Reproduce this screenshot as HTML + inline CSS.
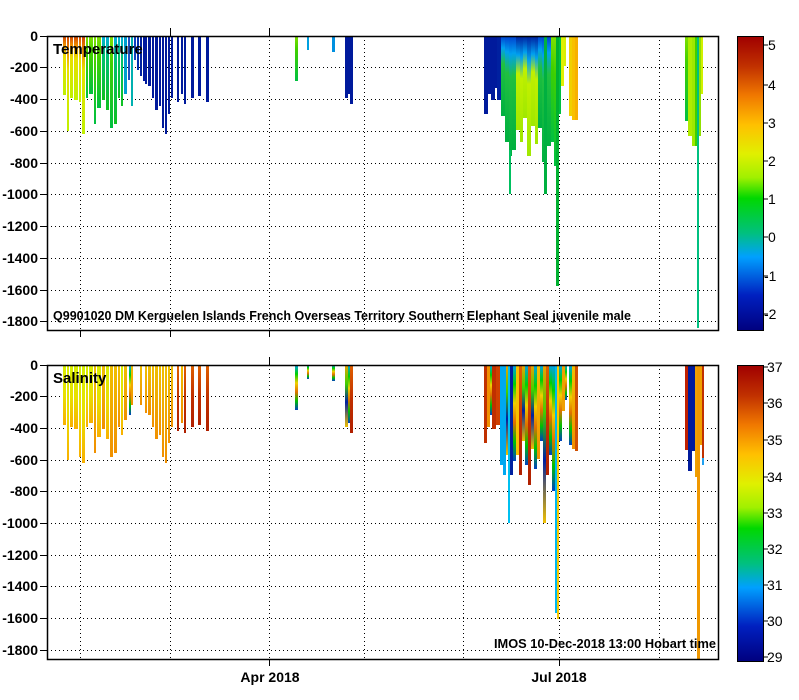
<!DOCTYPE html>
<html><head><meta charset="utf-8"><style>
html,body{margin:0;padding:0;background:#fff;}
svg{display:block;}
text{font-family:"Liberation Sans",sans-serif;}
.yl{font-size:14px;font-weight:bold;text-anchor:end;fill:#000;}
.cl{font-size:14px;fill:#000;}
</style></head><body>
<svg width="799" height="700" viewBox="0 0 799 700" xmlns="http://www.w3.org/2000/svg">
<defs>
<linearGradient id="jet" x1="0" y1="1" x2="0" y2="0">
<stop offset="0" stop-color="#00007f"/>
<stop offset="0.12" stop-color="#0020c0"/>
<stop offset="0.25" stop-color="#00a0ff"/>
<stop offset="0.33" stop-color="#00c080"/>
<stop offset="0.45" stop-color="#00d800"/>
<stop offset="0.52" stop-color="#a0f000"/>
<stop offset="0.6" stop-color="#e0f000"/>
<stop offset="0.7" stop-color="#ffc000"/>
<stop offset="0.8" stop-color="#f07800"/>
<stop offset="0.9" stop-color="#c03000"/>
<stop offset="1" stop-color="#a00000"/>
</linearGradient>
<linearGradient id="tA" x1="0" y1="0" x2="0" y2="1"><stop offset="0" stop-color="#d04000"/><stop offset="0.15" stop-color="#f09000"/><stop offset="0.35" stop-color="#e8e000"/><stop offset="1" stop-color="#c0f000"/></linearGradient>
<linearGradient id="tB" x1="0" y1="0" x2="0" y2="1"><stop offset="0" stop-color="#80e000"/><stop offset="0.3" stop-color="#40d000"/><stop offset="1" stop-color="#00c040"/></linearGradient>
<linearGradient id="tC" x1="0" y1="0" x2="0" y2="1"><stop offset="0" stop-color="#00b0e0"/><stop offset="0.3" stop-color="#00c070"/><stop offset="1" stop-color="#10c020"/></linearGradient>
<linearGradient id="tD" x1="0" y1="0" x2="0" y2="1"><stop offset="0" stop-color="#0040d0"/><stop offset="0.15" stop-color="#00a0f0"/><stop offset="0.35" stop-color="#20c040"/><stop offset="1" stop-color="#00b040"/></linearGradient>
<linearGradient id="tE" x1="0" y1="0" x2="0" y2="1"><stop offset="0" stop-color="#0020a0"/><stop offset="0.2" stop-color="#00a0f0"/><stop offset="0.4" stop-color="#c0f000"/><stop offset="1" stop-color="#a0e800"/></linearGradient>
<linearGradient id="sA" x1="0" y1="0" x2="0" y2="1"><stop offset="0" stop-color="#d8f000"/><stop offset="0.5" stop-color="#e8e000"/><stop offset="1" stop-color="#f8b000"/></linearGradient>
<linearGradient id="sB" x1="0" y1="0" x2="0" y2="1"><stop offset="0" stop-color="#f0c000"/><stop offset="1" stop-color="#f09000"/></linearGradient>
<linearGradient id="sC" x1="0" y1="0" x2="0" y2="1"><stop offset="0" stop-color="#e06000"/><stop offset="0.5" stop-color="#c03000"/><stop offset="1" stop-color="#b02000"/></linearGradient>
<linearGradient id="sM" x1="0" y1="0" x2="0" y2="1"><stop offset="0" stop-color="#00a0f0"/><stop offset="0.2" stop-color="#00d000"/><stop offset="0.4" stop-color="#f0d000"/><stop offset="0.6" stop-color="#e07000"/><stop offset="0.8" stop-color="#00c000"/><stop offset="1" stop-color="#0040c0"/></linearGradient>
<linearGradient id="sN" x1="0" y1="0" x2="0" y2="1"><stop offset="0" stop-color="#f0a000"/><stop offset="0.3" stop-color="#40d000"/><stop offset="0.6" stop-color="#0020a0"/><stop offset="1" stop-color="#f0c000"/></linearGradient>
</defs>

<g>
<g stroke="#000" stroke-width="1" stroke-dasharray="1,3">
<line x1="47" y1="67.5" x2="718" y2="67.5"/><line x1="47" y1="99.5" x2="718" y2="99.5"/><line x1="47" y1="131.5" x2="718" y2="131.5"/><line x1="47" y1="163.5" x2="718" y2="163.5"/><line x1="47" y1="194.5" x2="718" y2="194.5"/><line x1="47" y1="226.5" x2="718" y2="226.5"/><line x1="47" y1="258.5" x2="718" y2="258.5"/><line x1="47" y1="290.5" x2="718" y2="290.5"/><line x1="47" y1="321.5" x2="718" y2="321.5"/>
<line x1="80.5" y1="36" x2="80.5" y2="330"/><line x1="170.5" y1="36" x2="170.5" y2="330"/><line x1="269.5" y1="36" x2="269.5" y2="330"/><line x1="364.5" y1="36" x2="364.5" y2="330"/><line x1="463.5" y1="36" x2="463.5" y2="330"/><line x1="559.5" y1="36" x2="559.5" y2="330"/><line x1="659.5" y1="36" x2="659.5" y2="330"/>
</g>
<g>
<rect x="63" y="36" width="3" height="59" fill="url(#tA)"/>
<rect x="67" y="36" width="2" height="95" fill="url(#tA)"/>
<rect x="70" y="36" width="3" height="62" fill="url(#tA)"/>
<rect x="74" y="36" width="4" height="64" fill="url(#tA)"/>
<rect x="79" y="36" width="2" height="66" fill="url(#tA)"/>
<rect x="82" y="36" width="3" height="98" fill="url(#tA)"/>
<rect x="86" y="36" width="2" height="62" fill="url(#tB)"/>
<rect x="89" y="36" width="4" height="58" fill="url(#tB)"/>
<rect x="94" y="36" width="2" height="88" fill="url(#tB)"/>
<rect x="97" y="36" width="4" height="72" fill="url(#tB)"/>
<rect x="102" y="36" width="3" height="64" fill="url(#tC)"/>
<rect x="106" y="36" width="3" height="74" fill="url(#tC)"/>
<rect x="110" y="36" width="3" height="92" fill="url(#tB)"/>
<rect x="114" y="36" width="3" height="88" fill="url(#tC)"/>
<rect x="118" y="36" width="2" height="62" fill="url(#tC)"/>
<rect x="121" y="36" width="2" height="70" fill="url(#tC)"/>
<rect x="124" y="36" width="3" height="58" fill="#00a0d0"/>
<rect x="128" y="36" width="2" height="44" fill="#2050c0"/>
<rect x="131" y="36" width="2" height="70" fill="#00b0b0"/>
<rect x="134" y="36" width="2" height="24" fill="#1040c0"/>
<rect x="137" y="36" width="2" height="34" fill="#0030b0"/>
<rect x="140" y="36" width="2" height="40" fill="#0020a0"/>
<rect x="143" y="36" width="2" height="45" fill="#0018a0"/>
</g>
<g fill="#001a9c">
<rect x="145" y="36" width="2" height="48"/>
<rect x="148" y="36" width="3" height="50"/>
<rect x="152" y="36" width="2" height="62"/>
<rect x="155" y="36" width="3" height="74"/>
<rect x="159" y="36" width="2" height="70"/>
<rect x="162" y="36" width="2" height="92"/>
<rect x="165" y="36" width="2" height="98"/>
<rect x="168" y="36" width="2" height="78"/>
<rect x="171" y="36" width="2" height="62"/>
<rect x="177" y="36" width="2" height="66"/>
<rect x="181" y="36" width="2" height="58"/>
<rect x="184" y="36" width="2" height="68"/>
<rect x="191" y="36" width="3" height="62"/>
<rect x="198" y="36" width="3" height="60"/>
<rect x="206" y="36" width="3" height="66"/>
<rect x="295" y="36" width="3" height="45" fill="url(#tB)"/>
<rect x="307" y="36" width="2" height="14" fill="#00a0e0"/>
<rect x="332" y="36" width="3" height="16" fill="#0090e0"/>
<rect x="345" y="36" width="3" height="62"/>
<rect x="348" y="36" width="2" height="58"/>
<rect x="350" y="36" width="3" height="68"/>
</g>
<g>
<rect x="484" y="36" width="4" height="78" fill="#001a9c"/>
<rect x="488" y="36" width="3" height="58" fill="#001a9c"/>
<rect x="491" y="36" width="4" height="64" fill="#001a9c"/>
<rect x="495" y="36" width="3" height="52" fill="#001a9c"/>
<rect x="497" y="36" width="4" height="64" fill="#0020a0"/>
<rect x="501" y="36" width="4" height="80" fill="url(#tD)"/>
<rect x="505" y="36" width="4" height="106" fill="url(#tD)"/>
<rect x="509" y="36" width="3" height="120" fill="url(#tD)"/>
<rect x="509" y="150" width="2" height="44" fill="#00c060"/>
<rect x="512" y="36" width="4" height="114" fill="url(#tD)"/>
<rect x="516" y="36" width="4" height="94" fill="url(#tE)"/>
<rect x="520" y="36" width="3" height="106" fill="url(#tE)"/>
<rect x="523" y="36" width="4" height="82" fill="url(#tE)"/>
<rect x="527" y="36" width="4" height="120" fill="url(#tE)"/>
<rect x="531" y="36" width="4" height="90" fill="url(#tE)"/>
<rect x="535" y="36" width="3" height="108" fill="url(#tE)"/>
<rect x="538" y="36" width="4" height="92" fill="url(#tD)"/>
<rect x="542" y="36" width="3" height="126" fill="url(#tD)"/>
<rect x="544" y="36" width="3" height="158" fill="#00b040"/>
<rect x="547" y="36" width="4" height="110" fill="url(#tD)"/>
<rect x="551" y="36" width="3" height="106" fill="url(#tB)"/>
<rect x="554" y="36" width="3" height="130" fill="url(#tB)"/>
<rect x="556" y="36" width="3" height="250" fill="#00b030"/>
<rect x="559" y="36" width="2" height="78" fill="#00c040"/>
<rect x="561" y="36" width="3" height="50" fill="#e0f000"/>
<rect x="564" y="36" width="2" height="30" fill="#d8f000"/>
<rect x="569" y="36" width="3" height="80" fill="#f0d000"/>
<rect x="572" y="36" width="3" height="84" fill="#f8c000"/>
<rect x="575" y="36" width="3" height="84" fill="#f8b000"/>
<rect x="685" y="36" width="3" height="85" fill="url(#tB)"/>
<rect x="688" y="36" width="4" height="100" fill="#b0ec00"/>
<rect x="692" y="36" width="3" height="110" fill="#a0e800"/>
<rect x="695" y="36" width="2" height="110" fill="#40d000"/>
<rect x="697" y="36" width="2" height="292" fill="#00c080"/>
<rect x="699" y="36" width="2" height="100" fill="#90e000"/>
<rect x="701" y="36" width="2" height="58" fill="#d0f000"/>
</g>
<rect x="47.5" y="36.5" width="671" height="294" fill="none" stroke="#000" stroke-width="1.5"/>
<g stroke="#000"><line x1="40" y1="36.5" x2="47" y2="36.5"/><line x1="40" y1="67.5" x2="47" y2="67.5"/><line x1="40" y1="99.5" x2="47" y2="99.5"/><line x1="40" y1="131.5" x2="47" y2="131.5"/><line x1="40" y1="163.5" x2="47" y2="163.5"/><line x1="40" y1="194.5" x2="47" y2="194.5"/><line x1="40" y1="226.5" x2="47" y2="226.5"/><line x1="40" y1="258.5" x2="47" y2="258.5"/><line x1="40" y1="290.5" x2="47" y2="290.5"/><line x1="40" y1="321.5" x2="47" y2="321.5"/>
<line x1="170.5" y1="28" x2="170.5" y2="36"/><line x1="269.5" y1="28" x2="269.5" y2="36"/><line x1="559.5" y1="28" x2="559.5" y2="36"/><line x1="80.5" y1="330" x2="80.5" y2="337"/><line x1="170.5" y1="330" x2="170.5" y2="337"/><line x1="269.5" y1="330" x2="269.5" y2="337"/></g>
<g class="yl"><text x="38" y="41">0</text><text x="38" y="72">-200</text><text x="38" y="104">-400</text><text x="38" y="136">-600</text><text x="38" y="168">-800</text><text x="38" y="199">-1000</text><text x="38" y="231">-1200</text><text x="38" y="263">-1400</text><text x="38" y="295">-1600</text><text x="38" y="326">-1800</text></g>
<text x="53" y="54" style="font-size:15px;font-weight:bold">Temperature</text>
<text x="53" y="320" textLength="578" lengthAdjust="spacingAndGlyphs" style="font-size:13px;font-weight:bold">Q9901020 DM Kerguelen Islands French Overseas Territory Southern Elephant Seal juvenile male</text>
<rect x="737.5" y="36.5" width="26" height="294" fill="url(#jet)" stroke="#000"/>
<g stroke="#000"><line x1="763" y1="45" x2="768" y2="45"/><line x1="763" y1="85" x2="768" y2="85"/><line x1="763" y1="123" x2="768" y2="123"/><line x1="763" y1="161" x2="768" y2="161"/><line x1="763" y1="199" x2="768" y2="199"/><line x1="763" y1="237" x2="768" y2="237"/><line x1="763" y1="276" x2="768" y2="276"/><line x1="763" y1="314" x2="768" y2="314"/></g>
<g class="cl"><text x="768" y="50">5</text><text x="768" y="90">4</text><text x="768" y="128">3</text><text x="768" y="166">2</text><text x="768" y="204">1</text><text x="768" y="242">0</text><text x="764" y="281">-1</text><text x="764" y="319">-2</text></g>
</g>

<g>
<g stroke="#000" stroke-width="1" stroke-dasharray="1,3">
<line x1="47" y1="396.5" x2="718" y2="396.5"/><line x1="47" y1="428.5" x2="718" y2="428.5"/><line x1="47" y1="460.5" x2="718" y2="460.5"/><line x1="47" y1="491.5" x2="718" y2="491.5"/><line x1="47" y1="523.5" x2="718" y2="523.5"/><line x1="47" y1="555.5" x2="718" y2="555.5"/><line x1="47" y1="586.5" x2="718" y2="586.5"/><line x1="47" y1="618.5" x2="718" y2="618.5"/><line x1="47" y1="650.5" x2="718" y2="650.5"/>
<line x1="80.5" y1="365" x2="80.5" y2="659"/><line x1="170.5" y1="365" x2="170.5" y2="659"/><line x1="269.5" y1="365" x2="269.5" y2="659"/><line x1="364.5" y1="365" x2="364.5" y2="659"/><line x1="463.5" y1="365" x2="463.5" y2="659"/><line x1="559.5" y1="365" x2="559.5" y2="659"/><line x1="659.5" y1="365" x2="659.5" y2="659"/>
</g>
<g>
<rect x="63" y="365" width="3" height="60" fill="url(#sA)"/>
<rect x="67" y="365" width="2" height="95" fill="url(#sA)"/>
<rect x="70" y="365" width="3" height="62" fill="url(#sA)"/>
<rect x="74" y="365" width="4" height="64" fill="url(#sA)"/>
<rect x="79" y="365" width="2" height="92" fill="url(#sA)"/>
<rect x="82" y="365" width="3" height="98" fill="url(#sA)"/>
<rect x="86" y="365" width="2" height="62" fill="url(#sA)"/>
<rect x="89" y="365" width="4" height="58" fill="url(#sA)"/>
<rect x="94" y="365" width="2" height="88" fill="url(#sB)"/>
<rect x="97" y="365" width="4" height="72" fill="url(#sA)"/>
<rect x="102" y="365" width="3" height="64" fill="url(#sB)"/>
<rect x="106" y="365" width="3" height="74" fill="url(#sA)"/>
<rect x="110" y="365" width="3" height="92" fill="url(#sB)"/>
<rect x="114" y="365" width="3" height="88" fill="url(#sB)"/>
<rect x="118" y="365" width="2" height="62" fill="url(#sB)"/>
<rect x="121" y="365" width="2" height="70" fill="url(#sA)"/>
<rect x="124" y="365" width="3" height="55" fill="url(#sB)"/>
<rect x="129" y="365" width="2" height="50" fill="url(#sM)"/>
<rect x="131" y="365" width="2" height="40" fill="url(#sB)"/>
<rect x="140" y="365" width="2" height="40" fill="url(#sB)"/>
<rect x="145" y="365" width="2" height="48" fill="url(#sB)"/>
<rect x="148" y="365" width="3" height="50" fill="url(#sB)"/>
<rect x="152" y="365" width="2" height="62" fill="url(#sB)"/>
<rect x="155" y="365" width="3" height="74" fill="url(#sB)"/>
<rect x="159" y="365" width="2" height="70" fill="url(#sB)"/>
<rect x="162" y="365" width="2" height="92" fill="url(#sB)"/>
<rect x="165" y="365" width="2" height="98" fill="url(#sB)"/>
<rect x="168" y="365" width="2" height="78" fill="url(#sB)"/>
<rect x="171" y="365" width="2" height="62" fill="url(#sB)"/>
<rect x="177" y="365" width="2" height="66" fill="url(#sC)"/>
<rect x="181" y="365" width="2" height="58" fill="url(#sB)"/>
<rect x="184" y="365" width="2" height="68" fill="url(#sC)"/>
<rect x="191" y="365" width="3" height="62" fill="url(#sC)"/>
<rect x="198" y="365" width="3" height="60" fill="url(#sC)"/>
<rect x="206" y="365" width="3" height="66" fill="url(#sC)"/>
<rect x="295" y="365" width="3" height="45" fill="url(#sM)"/>
<rect x="307" y="365" width="2" height="14" fill="url(#sM)"/>
<rect x="332" y="365" width="3" height="16" fill="url(#sM)"/>
<rect x="345" y="365" width="3" height="62" fill="url(#sN)"/>
<rect x="348" y="365" width="2" height="58" fill="url(#sM)"/>
<rect x="350" y="365" width="3" height="68" fill="url(#sC)"/>
</g>
<g>
<rect x="484" y="365" width="3" height="78" fill="#c03000"/>
<rect x="487" y="365" width="3" height="62" fill="#f09000"/>
<rect x="490" y="365" width="3" height="50" fill="url(#sM)"/>
<rect x="492" y="365" width="4" height="64" fill="#c03000"/>
<rect x="496" y="365" width="4" height="60" fill="#d04000"/>
<rect x="500" y="365" width="3" height="100" fill="#00a8f0"/>
<rect x="503" y="365" width="3" height="110" fill="#00a8f0"/>
<rect x="506" y="365" width="3" height="90" fill="url(#sN)"/>
<rect x="508" y="365" width="2" height="158" fill="#00c0f0"/>
<rect x="510" y="365" width="3" height="110" fill="#0020a0"/>
<rect x="513" y="365" width="3" height="96" fill="url(#sM)"/>
<rect x="516" y="365" width="3" height="90" fill="#f8c000"/>
<rect x="519" y="365" width="3" height="110" fill="url(#sC)"/>
<rect x="522" y="365" width="3" height="76" fill="url(#sN)"/>
<rect x="525" y="365" width="3" height="100" fill="url(#sM)"/>
<rect x="528" y="365" width="3" height="120" fill="url(#sC)"/>
<rect x="531" y="365" width="3" height="84" fill="url(#sN)"/>
<rect x="534" y="365" width="3" height="104" fill="url(#sM)"/>
<rect x="537" y="365" width="3" height="94" fill="url(#sB)"/>
<rect x="540" y="365" width="3" height="76" fill="url(#sM)"/>
<rect x="543" y="365" width="3" height="158" fill="url(#sN)"/>
<rect x="546" y="365" width="3" height="110" fill="url(#sC)"/>
<rect x="549" y="365" width="3" height="90" fill="url(#sM)"/>
<rect x="552" y="365" width="3" height="126" fill="url(#sM)"/>
<rect x="555" y="365" width="2" height="248" fill="#00b8f0"/>
<rect x="557" y="365" width="2" height="254" fill="#f8c800"/>
<rect x="559" y="365" width="3" height="76" fill="url(#sM)"/>
<rect x="562" y="365" width="3" height="46" fill="#f0a000"/>
<rect x="565" y="365" width="2" height="35" fill="url(#sM)"/>
<rect x="569" y="365" width="3" height="80" fill="url(#sM)"/>
<rect x="572" y="365" width="3" height="84" fill="url(#sB)"/>
<rect x="575" y="365" width="3" height="86" fill="#d05000"/>
<rect x="685" y="365" width="3" height="85" fill="#c02000"/>
<rect x="688" y="365" width="4" height="106" fill="#001a9c"/>
<rect x="692" y="365" width="3" height="86" fill="#001a9c"/>
<rect x="695" y="365" width="2" height="112" fill="#f0a000"/>
<rect x="697" y="365" width="3" height="294" fill="#f09800"/>
<rect x="700" y="365" width="2" height="80" fill="#f0a000"/>
<rect x="702" y="365" width="2" height="98" fill="#c03000"/>
<rect x="702" y="458" width="2" height="7" fill="#20a0f0"/>
</g>
<rect x="47.5" y="365.5" width="671" height="294" fill="none" stroke="#000" stroke-width="1.5"/>
<g stroke="#000"><line x1="40" y1="365.5" x2="47" y2="365.5"/><line x1="40" y1="396.5" x2="47" y2="396.5"/><line x1="40" y1="428.5" x2="47" y2="428.5"/><line x1="40" y1="460.5" x2="47" y2="460.5"/><line x1="40" y1="491.5" x2="47" y2="491.5"/><line x1="40" y1="523.5" x2="47" y2="523.5"/><line x1="40" y1="555.5" x2="47" y2="555.5"/><line x1="40" y1="586.5" x2="47" y2="586.5"/><line x1="40" y1="618.5" x2="47" y2="618.5"/><line x1="40" y1="650.5" x2="47" y2="650.5"/>
<line x1="269.5" y1="357" x2="269.5" y2="365"/><line x1="559.5" y1="357" x2="559.5" y2="365"/><line x1="269.5" y1="659" x2="269.5" y2="666"/><line x1="559.5" y1="659" x2="559.5" y2="666"/></g>
<g class="yl"><text x="38" y="370">0</text><text x="38" y="401">-200</text><text x="38" y="433">-400</text><text x="38" y="465">-600</text><text x="38" y="496">-800</text><text x="38" y="528">-1000</text><text x="38" y="560">-1200</text><text x="38" y="591">-1400</text><text x="38" y="623">-1600</text><text x="38" y="655">-1800</text></g>
<text x="53" y="383" style="font-size:15px;font-weight:bold">Salinity</text>
<text x="494" y="648" textLength="222" lengthAdjust="spacingAndGlyphs" style="font-size:13px;font-weight:bold">IMOS 10-Dec-2018 13:00 Hobart time</text>
<text x="270" y="682" text-anchor="middle" style="font-size:14px;font-weight:bold">Apr 2018</text>
<text x="559" y="682" text-anchor="middle" style="font-size:14px;font-weight:bold">Jul 2018</text>
<rect x="737.5" y="365.5" width="26" height="296" fill="url(#jet)" stroke="#000"/>
<g stroke="#000"><line x1="763" y1="367" x2="768" y2="367"/><line x1="763" y1="403" x2="768" y2="403"/><line x1="763" y1="440" x2="768" y2="440"/><line x1="763" y1="477" x2="768" y2="477"/><line x1="763" y1="513" x2="768" y2="513"/><line x1="763" y1="549" x2="768" y2="549"/><line x1="763" y1="585" x2="768" y2="585"/><line x1="763" y1="621" x2="768" y2="621"/><line x1="763" y1="657" x2="768" y2="657"/></g>
<g class="cl"><text x="767" y="372">37</text><text x="767" y="408">36</text><text x="767" y="445">35</text><text x="767" y="482">34</text><text x="767" y="518">33</text><text x="767" y="554">32</text><text x="767" y="590">31</text><text x="767" y="626">30</text><text x="767" y="662">29</text></g>
</g>
</svg>
</body></html>
